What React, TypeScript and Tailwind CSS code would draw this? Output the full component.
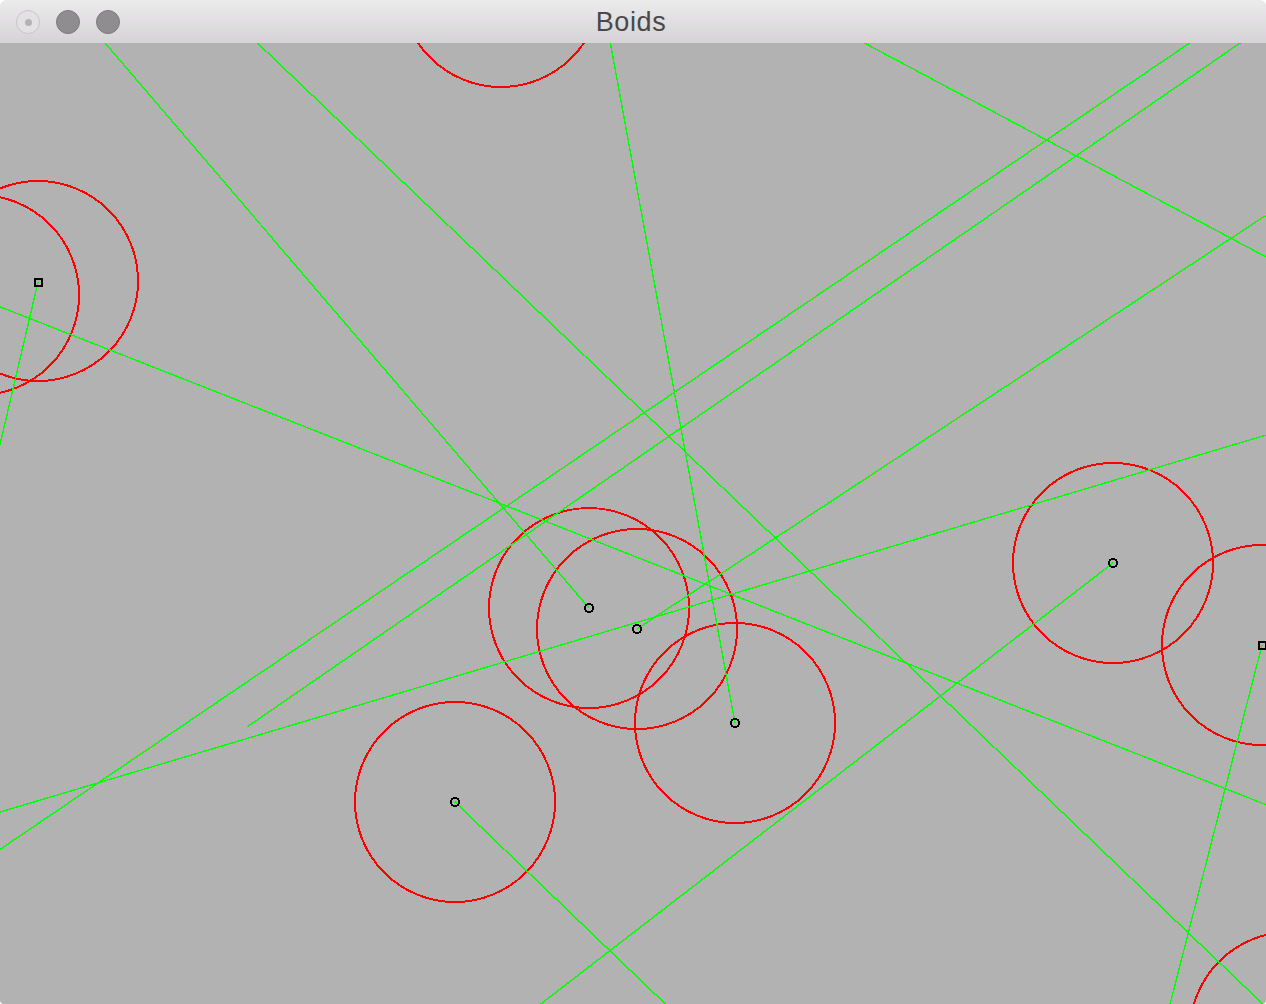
import React from "react";

// page coordinates; the canvas starts below the 43px title bar
const TOP = 43;

const vectors: [number, number, number, number][] = [
  [94, 30, 589, 608],
  [244, 30, 1290, 1030],
  [608, 30, 735, 723],
  [840, 30, 1300, 275],
  [1209, 30, -20, 863],
  [1259, 30, 247, 727],
  [637, 629, 1300, 193],
  [-30, 295, 1300, 818],
  [-30, 821, 1300, 425],
  [38, 282, -5, 466],
  [1113, 563, 520, 1020],
  [455, 802, 680, 1018],
  [1262, 645, 1166, 1020],
];

const ranges: [number, number][] = [
  [501, -13],
  [38, 281],
  [-21, 295],
  [589, 608],
  [637, 629],
  [735, 723],
  [455, 802],
  [1113, 563],
  [1262, 645],
  [1290, 1032],
];

const boids: { x: number; y: number; square?: boolean }[] = [
  { x: 589, y: 608 },
  { x: 637, y: 629 },
  { x: 735, y: 723 },
  { x: 455, y: 802 },
  { x: 1113, y: 563 },
  { x: 38, y: 282, square: true },
  { x: 1262, y: 645, square: true },
];

function TrafficLights() {
  return (
    <div className="flex items-center gap-4 pl-4 pt-[1px]">
      <div className="w-6 h-6 rounded-full bg-[#e3e1e3] border border-[#c8c6c8] flex items-center justify-center">
        <div className="w-[7px] h-[7px] rounded-full bg-[#b4b2b4]" />
      </div>
      <div className="w-6 h-6 rounded-full bg-[#8f8d90] border border-[#7c7a7d]" />
      <div className="w-6 h-6 rounded-full bg-[#8f8d90] border border-[#7c7a7d]" />
    </div>
  );
}

export default function App() {
  return (
    <div className="w-[1266px] h-[1004px] bg-white flex flex-col overflow-hidden">
      <div className="relative h-[43px] shrink-0 rounded-t-[6px] bg-gradient-to-b from-[#ecebec] to-[#d5d3d5] flex items-center">
        <TrafficLights />
        <div className="absolute inset-0 flex items-center justify-center pt-[2px] pr-[4px]">
          <span className="text-[27px] leading-none text-[#4a484a] font-['Liberation_Sans',Arial,sans-serif] tracking-[0.6px]">
            Boids
          </span>
        </div>
      </div>
      <div className="flex-1 bg-[#b2b2b2] rounded-b-[4px] overflow-hidden">
        <svg
          width="1266"
          height="961"
          viewBox="0 0 1266 961"
          shapeRendering="crispEdges"
          className="block"
        >
          <g transform={`translate(0,-${TOP})`}>
            {ranges.map(([cx, cy], i) => (
              <circle key={i} cx={cx} cy={cy} r={100} fill="none" stroke="#ff0000" strokeWidth={2} />
            ))}
            {vectors.map(([x1, y1, x2, y2], i) => (
              <line key={i} x1={x1} y1={y1} x2={x2} y2={y2} stroke="#00ff00" strokeWidth={1.4} />
            ))}
            {boids.map((b, i) =>
              b.square ? (
                <rect key={i} x={b.x - 3.5} y={b.y - 3.5} width={7} height={7} fill="none" stroke="#000" strokeWidth={2} />
              ) : (
                <circle key={i} cx={b.x} cy={b.y} r={4} fill="none" stroke="#000" strokeWidth={2} />
              )
            )}
          </g>
        </svg>
      </div>
    </div>
  );
}
